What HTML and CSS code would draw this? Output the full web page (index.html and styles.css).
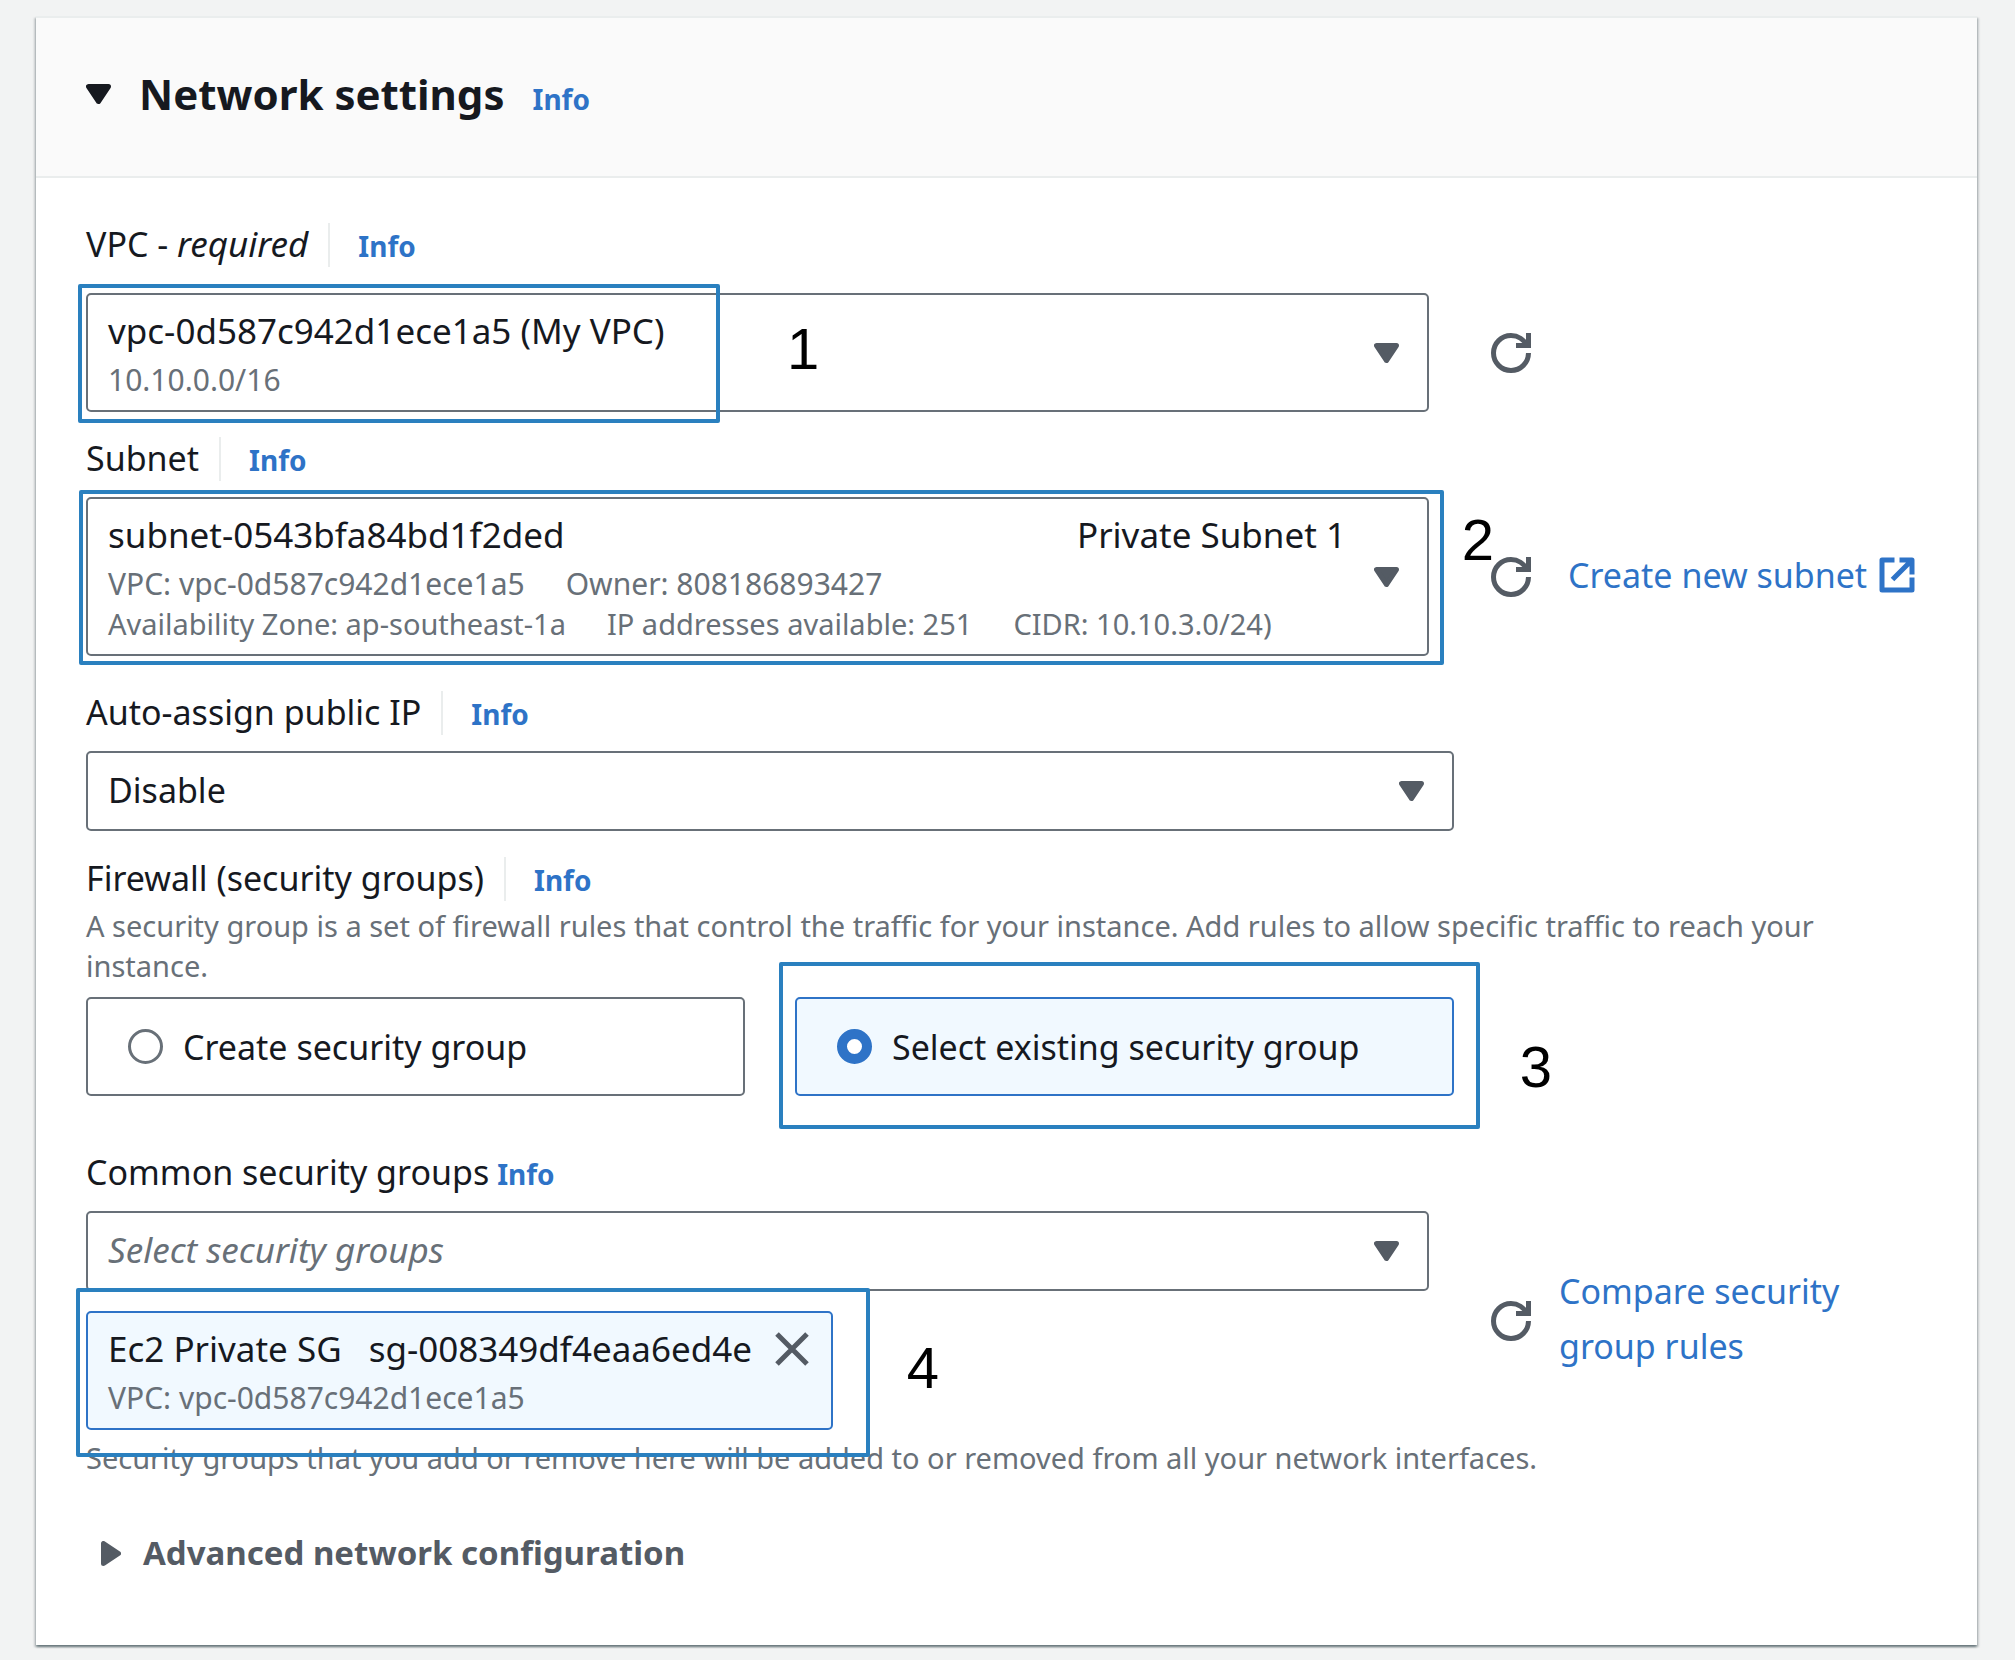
FILE: index.html
```html
<!DOCTYPE html>
<html lang="en">
<head>
<meta charset="utf-8">
<meta name="viewport" content="width=device-width, initial-scale=1">
<title>Network settings</title>
<link rel="stylesheet" href="styles.css">
</head>
<body>
<svg class="sprite" aria-hidden="true">
  <symbol id="caret-down" viewBox="3 4 10 8"><path d="M4 5h8l-4 6z" fill="currentColor" stroke="currentColor" stroke-width="2" stroke-linejoin="round"/></symbol>
  <symbol id="caret-right" viewBox="4 3 8 10"><path d="M5 4v8l6-4z" fill="currentColor" stroke="currentColor" stroke-width="2" stroke-linejoin="round"/></symbol>
  <symbol id="refresh" viewBox="0 0 16 16"><path d="M15 8c0 3.87-3.13 7-7 7s-7-3.13-7-7 3.13-7 7-7c2.79 0 5.2 1.63 6.33 4M10 5h5V0" fill="none" stroke="currentColor" stroke-width="2"/></symbol>
  <symbol id="external" viewBox="0 0 16 16"><path d="M9 2h5v5.8M14 2l-7.8 7.8M14 9v5H2V2h5" fill="none" stroke="currentColor" stroke-width="2" stroke-linejoin="round"/></symbol>
  <symbol id="close" viewBox="0 0 16 16"><path d="M2 2l12 12M14 2L2 14" fill="none" stroke="currentColor" stroke-width="2"/></symbol>
</svg>

<main class="panel">
  <header class="panel-header">
    <svg class="caret" aria-hidden="true"><use href="#caret-down"/></svg>
    <h1 class="panel-title">Network settings</h1>
    <a class="info" href="#info">Info</a>
  </header>

  <form class="panel-body">
    <section class="field">
      <div class="label-row">
        <span class="label" id="vpc-label">VPC - <em>required</em></span>
        <span class="divider"></span>
        <a class="info" href="#vpc-info">Info</a>
      </div>
      <div class="field-row field-row-first">
        <div class="anchor">
          <button class="picker" type="button" aria-haspopup="listbox" aria-labelledby="vpc-label vpc-value">
            <span class="picker-text" id="vpc-value">
              <span class="picker-main">vpc-0d587c942d1ece1a5 (My VPC)</span>
              <span class="meta">10.10.0.0/16</span>
            </span>
            <svg class="caret" aria-hidden="true"><use href="#caret-down"/></svg>
          </button>
          <span class="mark mark-vpc"></span>
          <span class="step step-1">1</span>
        </div>
        <div class="side">
          <button class="icon-button" type="button" aria-label="Refresh VPCs"><svg class="icon"><use href="#refresh"/></svg></button>
        </div>
      </div>
    </section>

    <section class="field field-subnet">
      <div class="label-row">
        <span class="label" id="subnet-label">Subnet</span>
        <span class="divider"></span>
        <a class="info" href="#subnet-info">Info</a>
      </div>
      <div class="field-row">
        <div class="anchor">
          <button class="picker" type="button" aria-haspopup="listbox" aria-labelledby="subnet-label subnet-value">
            <span class="picker-text" id="subnet-value">
              <span class="picker-main"><span>subnet-0543bfa84bd1f2ded</span><span>Private Subnet 1</span></span>
              <span class="meta"><span>VPC: vpc-0d587c942d1ece1a5</span><span>Owner: 808186893427</span></span>
              <span class="meta meta-small"><span>Availability Zone: ap-southeast-1a</span><span>IP addresses available: 251</span><span>CIDR: 10.10.3.0/24)</span></span>
            </span>
            <svg class="caret" aria-hidden="true"><use href="#caret-down"/></svg>
          </button>
          <span class="mark mark-subnet"></span>
          <span class="step step-2">2</span>
        </div>
        <div class="side side-wide">
          <button class="icon-button" type="button" aria-label="Refresh subnets"><svg class="icon"><use href="#refresh"/></svg></button>
          <a class="link" href="#create-subnet">Create new subnet<svg class="icon" aria-hidden="true"><use href="#external"/></svg></a>
        </div>
      </div>
    </section>

    <section class="field field-ip">
      <div class="label-row">
        <label class="label" for="public-ip">Auto-assign public IP</label>
        <span class="divider"></span>
        <a class="info" href="#ip-info">Info</a>
      </div>
      <div class="select-wrap wide">
        <select class="select" id="public-ip"><option>Disable</option><option>Enable</option></select>
        <svg class="caret" aria-hidden="true"><use href="#caret-down"/></svg>
      </div>
    </section>

    <section class="field field-firewall">
      <div class="label-row">
        <span class="label" id="firewall-label">Firewall (security groups)</span>
        <span class="divider"></span>
        <a class="info" href="#firewall-info">Info</a>
      </div>
      <p class="hint">A security group is a set of firewall rules that control the traffic for your instance. Add rules to allow specific traffic to reach your instance.</p>
      <div class="options wide" role="radiogroup" aria-labelledby="firewall-label">
        <label class="option"><input class="radio" type="radio" name="firewall">Create security group</label>
        <div class="anchor">
          <label class="option selected"><input class="radio" type="radio" name="firewall" checked>Select existing security group</label>
          <span class="mark mark-option"></span>
          <span class="step step-3">3</span>
        </div>
      </div>
    </section>

    <section class="field field-groups">
      <div class="label-row">
        <label class="label" for="groups">Common security groups</label>
        <a class="info info-near" href="#groups-info">Info</a>
      </div>
      <div class="field-row">
        <div class="stack">
          <div class="select-wrap">
            <select class="select placeholder" id="groups"><option>Select security groups</option></select>
            <svg class="caret" aria-hidden="true"><use href="#caret-down"/></svg>
          </div>
          <div class="token">
            <div class="token-main">
              <span>Ec2 Private SG</span>
              <span>sg-008349df4eaa6ed4e</span>
              <button class="icon-button dismiss" type="button" aria-label="Remove Ec2 Private SG"><svg class="icon"><use href="#close"/></svg></button>
            </div>
            <div class="meta">VPC: vpc-0d587c942d1ece1a5</div>
            <span class="mark mark-token"></span>
            <span class="step step-4">4</span>
          </div>
        </div>
        <div class="side">
          <button class="icon-button" type="button" aria-label="Refresh security groups"><svg class="icon"><use href="#refresh"/></svg></button>
          <a class="link" href="#compare">Compare security group rules</a>
        </div>
      </div>
      <p class="hint hint-groups">Security groups that you add or remove here will be added to or removed from all your network interfaces.</p>
    </section>

    <button class="advanced" type="button" aria-expanded="false"><svg class="caret-side" aria-hidden="true"><use href="#caret-right"/></svg>Advanced network configuration</button>
  </form>
</main>
</body>
</html>
```
FILE: styles.css
```css
:root {
  --text: #16191f;
  --muted: #687078;
  --icon: #545b64;
  --blue: #2e73c7;
  --mark: #2a80bf;
  --tint: #f1f9ff;
  --line: #eaeded;
}

* { box-sizing: border-box; }

body {
  margin: 0;
  padding: 16px 38px 15px 36px;
  background: #f2f3f3;
  color: var(--text);
  font: 34px/50px "Noto Sans", "Open Sans", sans-serif;
}

button, select, input {
  font: inherit;
  color: inherit;
  margin: 0;
}

a { color: var(--blue); text-decoration: none; }

.sprite { position: absolute; width: 0; height: 0; }

.panel {
  background: #fff;
  border-top: 2px solid var(--line);
  box-shadow: 0 2px 2px rgba(0, 28, 36, .4), 2px 2px 2px rgba(0, 28, 36, .15), -2px 2px 2px rgba(0, 28, 36, .15);
}

.panel-header {
  display: flex;
  align-items: baseline;
  padding: 48px 50px 55px;
  background: #fafafa;
  border-bottom: 2px solid var(--line);
}

.panel-title {
  margin: 0 28px;
  font-size: 42px;
  line-height: 55px;
  font-weight: 700;
}

.panel-header .caret { color: var(--text); align-self: center; }

.info {
  font-size: 28px;
  line-height: 40px;
  font-weight: 700;
}

.panel-body { padding: 41px 50px 67px; }

.field-subnet { margin-top: 21px; }
.field-ip { margin-top: 31px; }
.field-firewall { margin-top: 22px; }
.field-groups { margin-top: 51px; }

.label-row {
  display: flex;
  align-items: baseline;
  height: 50px;
}

.label em { font-size: 35px; }

.divider {
  align-self: flex-end;
  width: 2px;
  height: 44px;
  margin: 0 28px 2px 20px;
  background: var(--line);
}

.info-near { margin-left: 8px; }

.field-row {
  display: grid;
  grid-template-columns: minmax(0, 1fr) 436px;
  column-gap: 62px;
  align-items: center;
  margin-top: 14px;
}

.field-row-first { margin-top: 24px; }

.wide { margin-right: 473px; }

.anchor { position: relative; }

.picker {
  display: flex;
  align-items: center;
  gap: 28px;
  width: 100%;
  padding: 11px 28px 10px 20px;
  border: 2px solid var(--muted);
  border-radius: 5px;
  background: #fff;
  text-align: left;
}

.picker-text { flex: 1; display: block; }

.picker-main {
  display: flex;
  justify-content: space-between;
  margin-bottom: 4px;
  font-size: 35px;
}

.meta {
  display: flex;
  gap: 41px;
  color: var(--muted);
  font-size: 30px;
  line-height: 40px;
}

.meta-small { font-size: 29px; }

.caret { flex: none; width: 25px; height: 20px; color: var(--icon); }
.caret-side { flex: none; width: 20px; height: 25px; }
.icon { display: block; flex: none; width: 40px; height: 40px; }

.side { display: flex; align-items: center; gap: 28px; }
.side-wide { gap: 37px; }

.icon-button {
  flex: none;
  padding: 0;
  border: 0;
  background: none;
  color: var(--icon);
}

.link {
  display: flex;
  align-items: center;
  gap: 10px;
  padding-bottom: 3px;
  line-height: 55px;
}

.select-wrap { display: grid; align-items: center; margin-top: 14px; }
.select-wrap > * { grid-area: 1 / 1; }
.select-wrap .caret { justify-self: end; margin-right: 30px; pointer-events: none; }
.field-row .select-wrap { margin-top: 0; }

.select {
  appearance: none;
  width: 100%;
  height: 80px;
  padding: 0 70px 2px 20px;
  border: 2px solid var(--muted);
  border-radius: 5px;
  background: #fff;
}

.placeholder { color: var(--muted); font-size: 35px; font-style: italic; }

.hint {
  margin: 3px 0 0;
  color: var(--muted);
  font-size: 29px;
  line-height: 40px;
}

.hint-groups { margin-top: 8px; }

.options {
  display: grid;
  grid-template-columns: 1fr 1fr;
  gap: 50px;
  margin-top: 11px;
}

.option {
  display: flex;
  align-items: center;
  gap: 20px;
  height: 99px;
  padding-left: 40px;
  border: 2px solid var(--muted);
  border-radius: 5px;
}

.selected { border-color: var(--blue); background: var(--tint); }

.radio {
  appearance: none;
  width: 35px;
  height: 35px;
  border: 3px solid var(--muted);
  border-radius: 50%;
  background: #fff;
}

.radio:checked { border: 10px solid var(--blue); }

.stack { display: flex; flex-direction: column; gap: 20px; align-items: flex-start; }
.stack .select-wrap { width: 100%; }

.token {
  position: relative;
  padding: 11px 19px 10px 20px;
  border: 2px solid var(--blue);
  border-radius: 5px;
  background: var(--tint);
}

.token-main {
  display: flex;
  align-items: center;
  gap: 27px;
  margin-bottom: 4px;
  font-size: 35px;
}

.dismiss { margin-left: -7px; }

.advanced {
  display: flex;
  align-items: center;
  gap: 22px;
  margin-top: 50px;
  padding: 0 0 0 15px;
  border: 0;
  background: none;
  color: var(--icon);
  font-size: 33px;
  font-weight: 700;
}

/* Walkthrough highlights drawn over the form */
.mark {
  position: absolute;
  border: 4px solid var(--mark);
  border-radius: 2px;
  pointer-events: none;
}

.mark-vpc { inset: -9px auto -11px -8px; width: 642px; }
.mark-subnet { inset: -7px -15px -9px -7px; }
.mark-option { inset: -35px -26px -33px -16px; }
.mark-token { inset: -25px -39px -29px -12px; }

.step {
  position: absolute;
  color: #000;
  font: 58px/58px "Liberation Sans", Arial, sans-serif;
  pointer-events: none;
}

.step-1 { left: 701px; top: 27px; }
.step-2 { right: -65px; top: 14px; }
.step-3 { right: -98px; top: 41px; }
.step-4 { right: -108px; top: 26px; }
```
